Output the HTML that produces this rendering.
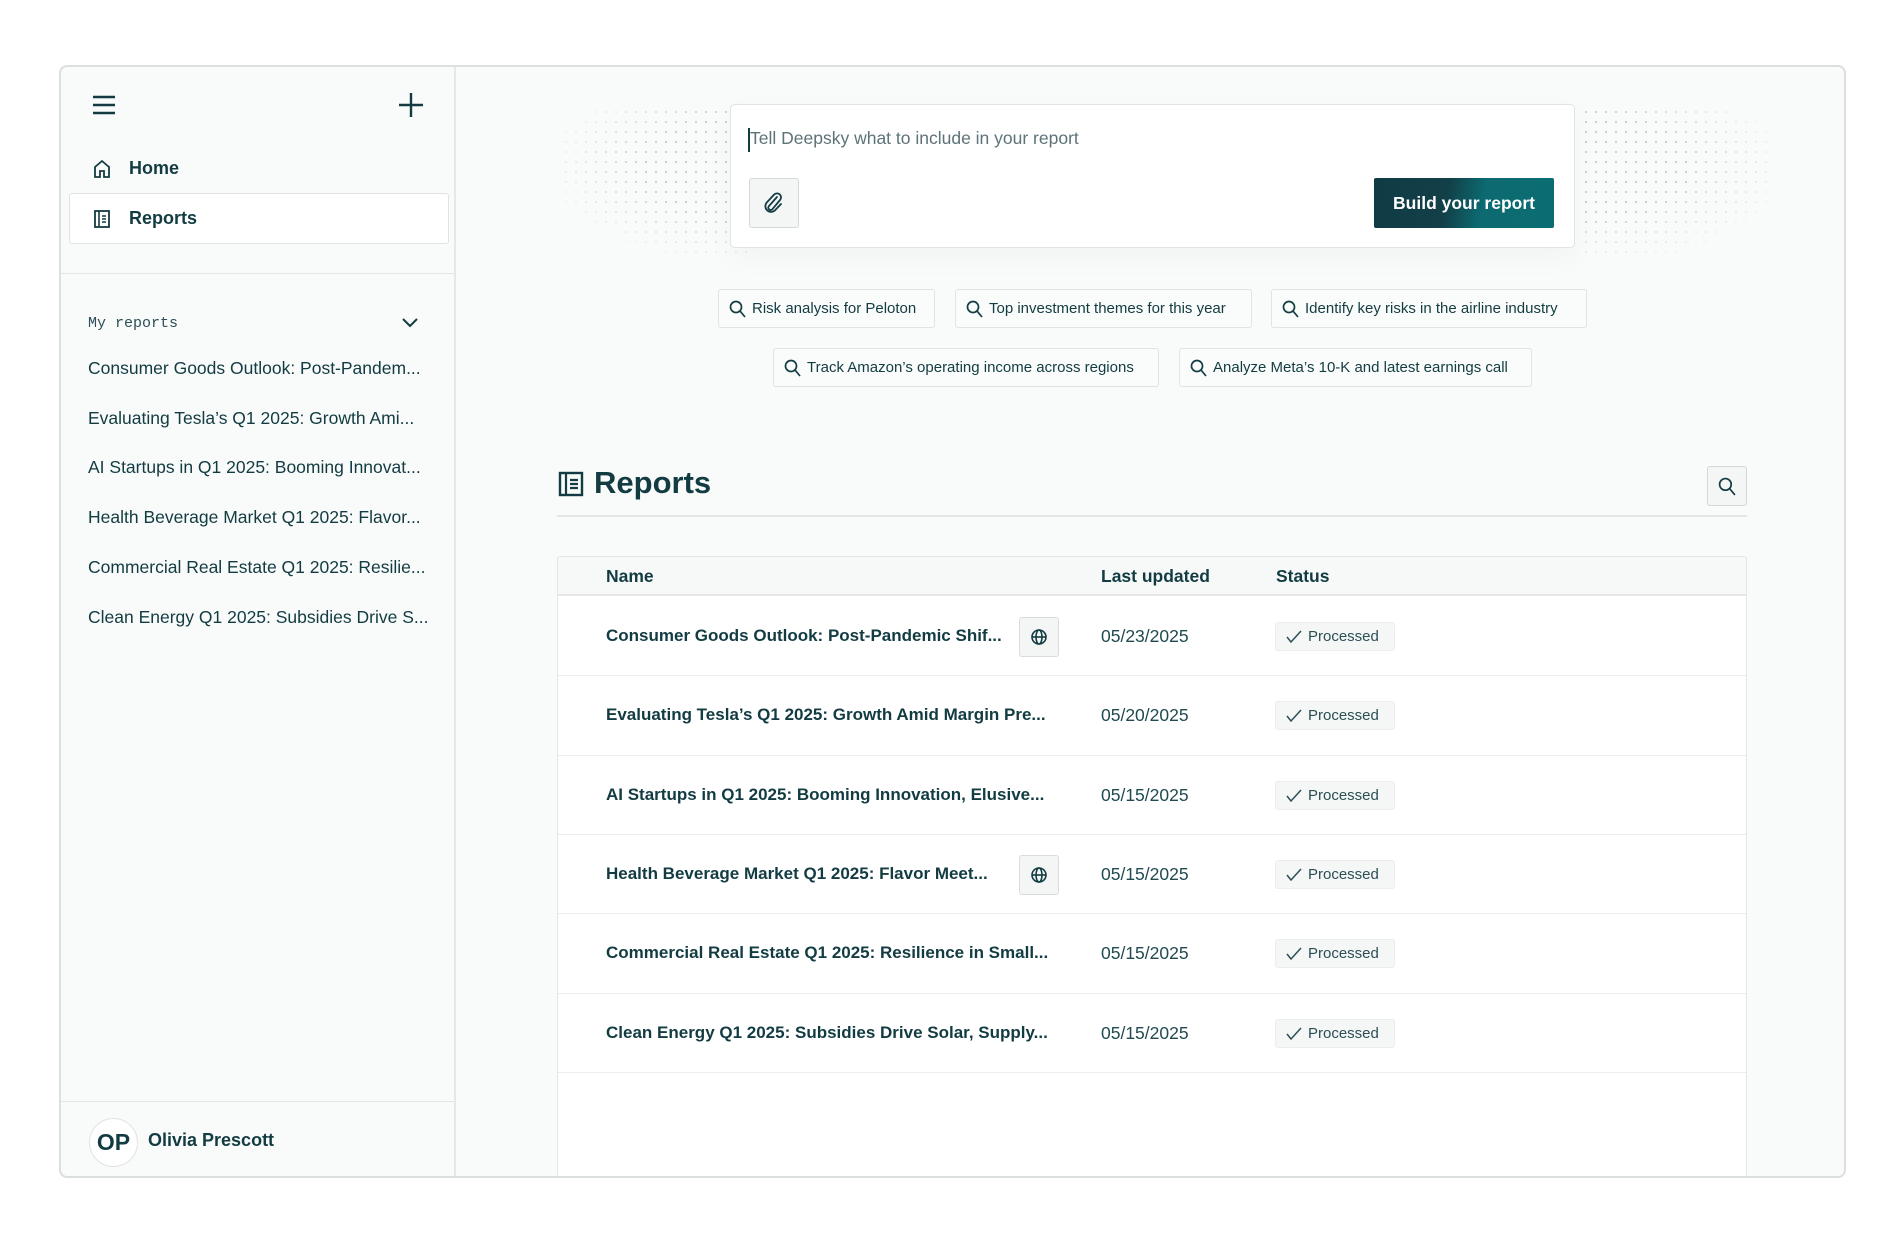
<!DOCTYPE html>
<html><head><meta charset="utf-8"><style>
*{box-sizing:border-box;margin:0;padding:0}
body{width:1904px;height:1244px;background:#fff;font-family:"Liberation Sans",sans-serif;color:#123c42;position:relative;overflow:hidden}
.a{position:absolute}
.panel{left:59px;top:65px;width:1787px;height:1113px;border:2px solid #dcdfdf;border-radius:8px;background:#f9fafa;overflow:hidden}
.side{left:0;top:0;width:395px;height:100%;border-right:2px solid #e6e8e8}
.t{white-space:nowrap}
.dots{background-image:radial-gradient(circle,#c9d0d2 1px,transparent 1.3px);background-size:10px 10px}
.chip{height:39px;border:1.5px solid #e0e4e4;border-radius:3px;background:#fafbfb;font-size:15px;display:flex;align-items:center;padding-left:10px;gap:6px}
.row{left:0;width:100%;border-bottom:1.5px solid #eceeee;background:#fff}
.nm{font-weight:bold;font-size:17px;left:48px;top:29px}
.dt{font-size:17.5px;left:543px;top:29px;color:#1f4a50}
.bd{left:717px;top:25px;width:120px;height:29px;background:#f5f6f6;border:1px solid #eceeee;border-radius:3px;font-size:15px;display:flex;align-items:center;padding-left:10px;gap:6px;color:#2b4f55}
.gl{left:461px;top:20px;width:40px;height:40px;border:1.5px solid #d8dddd;border-radius:3px;background:#f4f6f6;display:flex;align-items:center;justify-content:center}
</style></head><body>
<div class="a panel">
 <div class="a side">
  <svg class="a" style="left:30px;top:27px" width="26" height="22" viewBox="0 0 26 22"><path d="M2 3h22M2 11h22M2 19h22" stroke="#123c42" stroke-width="2.4"/></svg>
  <svg class="a" style="left:337px;top:25px" width="26" height="26" viewBox="0 0 26 26"><path d="M13 1v24M1 13h24" stroke="#123c42" stroke-width="2.4"/></svg>
  <svg class="a" style="left:32px;top:92px" width="18" height="20" viewBox="0 0 18 20"><path d="M2 18V8l7-6 7 6v10h-5v-6H7v6z" fill="none" stroke="#123c42" stroke-width="1.8"/></svg>
  <div class="a t" style="left:68px;top:91px;font-size:18px;font-weight:bold">Home</div>
  <div class="a" style="left:8px;top:126px;width:380px;height:51px;background:#fff;border:1.5px solid #e0e3e3;border-radius:3px"></div>
  <svg class="a" style="left:32px;top:142px" width="18" height="20" viewBox="0 0 18 20"><rect x="2" y="2" width="14" height="16" fill="none" stroke="#123c42" stroke-width="1.8"/><path d="M6 2v16M9 7h4M9 10h4M9 13h4" stroke="#123c42" stroke-width="1.6"/></svg>
  <div class="a t" style="left:68px;top:141px;font-size:18px;font-weight:bold">Reports</div>
  <div class="a" style="left:0;top:206px;width:100%;border-top:1.5px solid #e3e6e6"></div>
  <div class="a t" style="left:27px;top:248px;font-family:'Liberation Mono',monospace;font-size:15px;color:#2b4f55">My reports</div>
  <svg class="a" style="left:340px;top:250px" width="18" height="12" viewBox="0 0 18 12"><path d="M2 2l7 7 7-7" fill="none" stroke="#123c42" stroke-width="2"/></svg>
  <div class="a t" style="left:27px;top:291px;font-size:17.5px">Consumer Goods Outlook: Post-Pandem...</div>
  <div class="a t" style="left:27px;top:341px;font-size:17.5px">Evaluating Tesla’s Q1 2025: Growth Ami...</div>
  <div class="a t" style="left:27px;top:390px;font-size:17.5px">AI Startups in Q1 2025: Booming Innovat...</div>
  <div class="a t" style="left:27px;top:440px;font-size:17.5px">Health Beverage Market Q1 2025: Flavor...</div>
  <div class="a t" style="left:27px;top:490px;font-size:17.5px">Commercial Real Estate Q1 2025: Resilie...</div>
  <div class="a t" style="left:27px;top:540px;font-size:17.5px">Clean Energy Q1 2025: Subsidies Drive S...</div>
  <div class="a" style="left:0;top:1034px;width:100%;border-top:1.5px solid #e3e6e6"></div>
  <div class="a" style="left:28px;top:1051px;width:49px;height:49px;border-radius:50%;background:#fff;border:1px solid #e0e3e3;font-size:23px;font-weight:bold;display:flex;align-items:center;justify-content:center">OP</div>
  <div class="a t" style="left:87px;top:1063px;font-size:18px;font-weight:bold">Olivia Prescott</div>
 </div>
 <div class="a dots" style="left:500px;top:40px;width:190px;height:150px;-webkit-mask-image:radial-gradient(ellipse at 100% 40%,#000 40%,transparent 80%)"></div>
 <div class="a dots" style="left:1520px;top:40px;width:190px;height:150px;-webkit-mask-image:radial-gradient(ellipse at 0% 40%,#000 40%,transparent 80%)"></div>
 <div class="a" style="left:669px;top:37px;width:845px;height:144px;background:#fff;border:1.5px solid #e0e4e4;border-radius:5px;box-shadow:0 10px 30px rgba(0,0,0,.03)"></div>
 <div class="a" style="left:687px;top:61px;width:2px;height:24px;background:#123c42"></div>
 <div class="a t" style="left:689px;top:61px;font-size:17.5px;color:#5d7378">Tell Deepsky what to include in your report</div>
 <div class="a" style="left:688px;top:111px;width:50px;height:50px;border:1.5px solid #d3d9da;border-radius:3px;background:#f4f6f6"></div>
 <svg class="a" style="left:701px;top:123px" width="24" height="26" viewBox="0 0 24 26"><path d="M15 7l-8 9a2.3 2.3 0 003.3 3.3L18 10a4 4 0 00-5.7-5.6L4.6 12.7a5.7 5.7 0 008 8L19 14" fill="none" stroke="#123c42" stroke-width="1.8" stroke-linecap="round"/></svg>
 <div class="a t" style="left:1313px;top:111px;width:180px;height:50px;background:linear-gradient(100deg,#0f3b44 0%,#123f48 40%,#0c6a70 60%,#0b6d73 100%);border-radius:2px;color:#fff;font-weight:bold;font-size:17.5px;display:flex;align-items:center;justify-content:center">Build your report</div>
 <div class="a chip" style="left:657px;top:222px;width:217px"><svg width="17" height="18" viewBox="0 0 17 18"><circle cx="7" cy="7" r="5.5" fill="none" stroke="#123c42" stroke-width="1.7"/><path d="M11 11l5 6" stroke="#123c42" stroke-width="1.7"/></svg><span class="t">Risk analysis for Peloton</span></div>
 <div class="a chip" style="left:894px;top:222px;width:297px"><svg width="17" height="18" viewBox="0 0 17 18"><circle cx="7" cy="7" r="5.5" fill="none" stroke="#123c42" stroke-width="1.7"/><path d="M11 11l5 6" stroke="#123c42" stroke-width="1.7"/></svg><span class="t">Top investment themes for this year</span></div>
 <div class="a chip" style="left:1210px;top:222px;width:316px"><svg width="17" height="18" viewBox="0 0 17 18"><circle cx="7" cy="7" r="5.5" fill="none" stroke="#123c42" stroke-width="1.7"/><path d="M11 11l5 6" stroke="#123c42" stroke-width="1.7"/></svg><span class="t">Identify key risks in the airline industry</span></div>
 <div class="a chip" style="left:712px;top:281px;width:386px"><svg width="17" height="18" viewBox="0 0 17 18"><circle cx="7" cy="7" r="5.5" fill="none" stroke="#123c42" stroke-width="1.7"/><path d="M11 11l5 6" stroke="#123c42" stroke-width="1.7"/></svg><span class="t">Track Amazon’s operating income across regions</span></div>
 <div class="a chip" style="left:1118px;top:281px;width:353px"><svg width="17" height="18" viewBox="0 0 17 18"><circle cx="7" cy="7" r="5.5" fill="none" stroke="#123c42" stroke-width="1.7"/><path d="M11 11l5 6" stroke="#123c42" stroke-width="1.7"/></svg><span class="t">Analyze Meta’s 10-K and latest earnings call</span></div>
 <svg class="a" style="left:497px;top:404px" width="26" height="26" viewBox="0 0 26 26"><rect x="2" y="2" width="22" height="22" fill="none" stroke="#123c42" stroke-width="2.4"/><path d="M8 2v22M12 9h8M12 13h8M12 17h8" stroke="#123c42" stroke-width="2.2"/></svg>
 <div class="a t" style="left:533px;top:398px;font-size:31px;font-weight:bold">Reports</div>
 <div class="a" style="left:1646px;top:399px;width:40px;height:40px;border:1.5px solid #d3d9da;border-radius:3px;background:#f4f6f6;display:flex;align-items:center;justify-content:center"><svg width="18" height="19" viewBox="0 0 17 18"><circle cx="7" cy="7" r="5.5" fill="none" stroke="#123c42" stroke-width="1.6"/><path d="M11 11l5 6" stroke="#123c42" stroke-width="1.6"/></svg></div>
 <div class="a" style="left:496px;top:448px;width:1190px;border-top:2px solid #e3e6e6"></div>
 <div class="a" style="left:496px;top:489px;width:1190px;height:640px;border:1.5px solid #e3e6e6;border-radius:3px;background:#fff;overflow:hidden">
  <div class="a" style="left:0;top:0;width:100%;height:39px;background:#f7f8f8;border-bottom:2px solid #e6e8e8"></div>
  <div class="a t" style="left:48px;top:9px;font-size:17.5px;font-weight:bold">Name</div>
  <div class="a t" style="left:543px;top:9px;font-size:17.5px;font-weight:bold">Last updated</div>
  <div class="a t" style="left:718px;top:9px;font-size:17.5px;font-weight:bold">Status</div>
  <div class="a row" style="top:40px;height:79px"><div class="a t nm">Consumer Goods Outlook: Post-Pandemic Shif...</div><div class="a gl"><svg width="18" height="18" viewBox="0 0 18 18" fill="none" stroke="#123c42" stroke-width="1.6"><circle cx="9" cy="9" r="7"/><ellipse cx="9" cy="9" rx="3" ry="7"/><path d="M2 9h14"/></svg></div><div class="a t dt">05/23/2025</div><div class="a bd"><svg width="16" height="14" viewBox="0 0 16 14"><path d="M1 7l4 5 10-11" fill="none" stroke="#2b4f55" stroke-width="1.5"/></svg><span class="t">Processed</span></div></div>
  <div class="a row" style="top:119px;height:80px"><div class="a t nm">Evaluating Tesla’s Q1 2025: Growth Amid Margin Pre...</div><div class="a t dt">05/20/2025</div><div class="a bd"><svg width="16" height="14" viewBox="0 0 16 14"><path d="M1 7l4 5 10-11" fill="none" stroke="#2b4f55" stroke-width="1.5"/></svg><span class="t">Processed</span></div></div>
  <div class="a row" style="top:199px;height:79px"><div class="a t nm">AI Startups in Q1 2025: Booming Innovation, Elusive...</div><div class="a t dt">05/15/2025</div><div class="a bd"><svg width="16" height="14" viewBox="0 0 16 14"><path d="M1 7l4 5 10-11" fill="none" stroke="#2b4f55" stroke-width="1.5"/></svg><span class="t">Processed</span></div></div>
  <div class="a row" style="top:278px;height:79px"><div class="a t nm">Health Beverage Market Q1 2025: Flavor Meet...</div><div class="a gl"><svg width="18" height="18" viewBox="0 0 18 18" fill="none" stroke="#123c42" stroke-width="1.6"><circle cx="9" cy="9" r="7"/><ellipse cx="9" cy="9" rx="3" ry="7"/><path d="M2 9h14"/></svg></div><div class="a t dt">05/15/2025</div><div class="a bd"><svg width="16" height="14" viewBox="0 0 16 14"><path d="M1 7l4 5 10-11" fill="none" stroke="#2b4f55" stroke-width="1.5"/></svg><span class="t">Processed</span></div></div>
  <div class="a row" style="top:357px;height:80px"><div class="a t nm">Commercial Real Estate Q1 2025: Resilience in Small...</div><div class="a t dt">05/15/2025</div><div class="a bd"><svg width="16" height="14" viewBox="0 0 16 14"><path d="M1 7l4 5 10-11" fill="none" stroke="#2b4f55" stroke-width="1.5"/></svg><span class="t">Processed</span></div></div>
  <div class="a row" style="top:437px;height:79px"><div class="a t nm">Clean Energy Q1 2025: Subsidies Drive Solar, Supply...</div><div class="a t dt">05/15/2025</div><div class="a bd"><svg width="16" height="14" viewBox="0 0 16 14"><path d="M1 7l4 5 10-11" fill="none" stroke="#2b4f55" stroke-width="1.5"/></svg><span class="t">Processed</span></div></div>
 </div>
</div>
</body></html>
